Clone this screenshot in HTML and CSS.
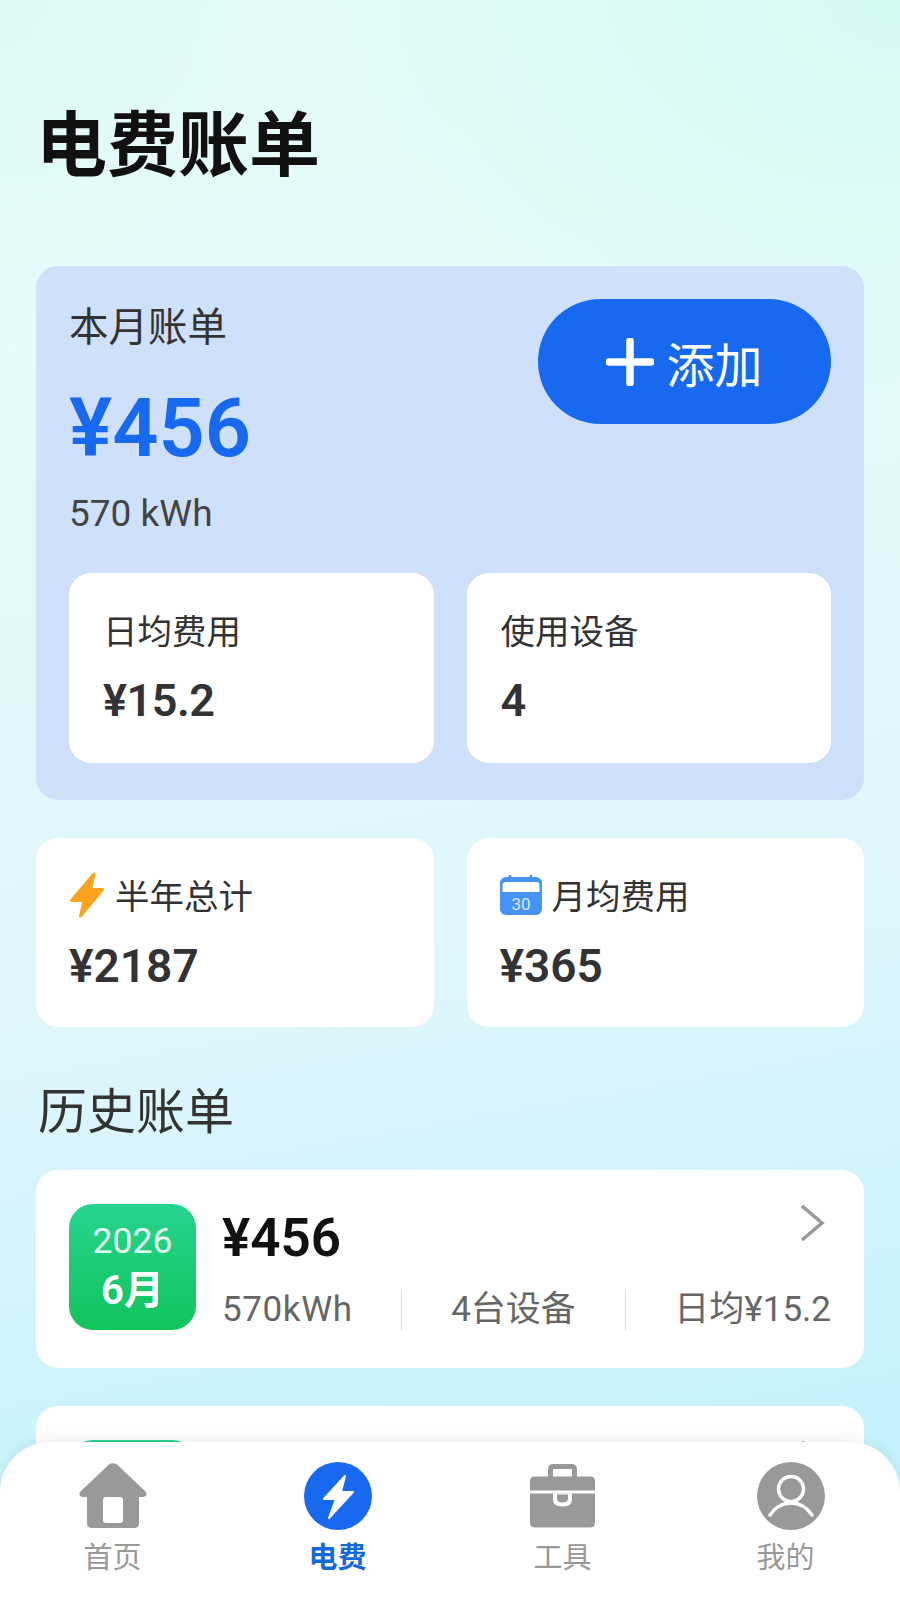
FILE: index.html
```html
<!DOCTYPE html>
<html lang="zh">
<head>
<meta charset="utf-8">
<title>电费账单</title>
<link rel="stylesheet" href="styles.css">
</head>
<body>
<main class="page">
  <h1 class="title">电费账单</h1>
  <section class="bill">
    <div class="bill-top">
      <div class="bill-info">
        <div class="bill-label">本月账单</div>
        <div class="bill-amount">¥456</div>
        <div class="bill-kwh">570 kWh</div>
      </div>
      <button class="add">
        <svg class="add-icon" viewBox="0 0 48 48"><path d="M24 3v42M3 24h42" fill="none" stroke="#fff" stroke-width="7.500" stroke-linecap="round"/></svg>
        <span>添加</span>
      </button>
    </div>
    <div class="pair">
      <div class="mini"><div class="mini-label">日均费用</div><div class="mini-value">¥15.2</div></div>
      <div class="mini"><div class="mini-label">使用设备</div><div class="mini-value">4</div></div>
    </div>
  </section>
  <section class="pair stats">
    <div class="stat">
      <div class="stat-head">
        <svg class="bolt" viewBox="0 0 36 46"><path d="M25 2 2.500 28.500H15L11.500 44 33.500 17.500H21.500L25 2Z" fill="#fba31f" stroke="#fba31f" stroke-width="3" stroke-linejoin="round"/></svg>
        <span>半年总计</span>
      </div>
      <div class="stat-value">¥2187</div>
    </div>
    <div class="stat">
      <div class="stat-head">
        <svg class="cal" viewBox="0 0 42 40"><rect y="2" width="42" height="38" rx="6" fill="#4793f3"/><path d="M2.500 17V10q0-3 3-3h31q3 0 3 3v7z" fill="#fff"/><path d="M10 0v7M31 0v7" stroke="#4793f3" stroke-width="2.500"/><text x="21" y="35" text-anchor="middle" class="cal-num">30</text></svg>
        <span>月均费用</span>
      </div>
      <div class="stat-value">¥365</div>
    </div>
  </section>
  <h2 class="history">历史账单</h2>
  <section class="list">
    <article class="row">
      <div class="badge"><span class="badge-year">2026</span><span class="badge-month">6月</span></div>
      <div class="row-body">
        <div class="row-top">
          <span class="row-amount">¥456</span>
          <svg class="chev" viewBox="0 0 26 38"><path d="M3 2l20 17L3 36" fill="none" stroke="#999" stroke-width="3.500"/></svg>
        </div>
        <div class="row-meta">
          <span class="meta-kwh">570kWh</span><i class="sep"></i><span>4台设备</span><i class="sep"></i><span>日均¥15.2</span>
        </div>
      </div>
    </article>
    <article class="row">
      <div class="badge"></div>
      <div class="row-body">
        <div class="row-top end">
          <svg class="chev" viewBox="0 0 26 38"><path d="M3 2l20 17L3 36" fill="none" stroke="#999" stroke-width="3.500"/></svg>
        </div>
      </div>
    </article>
  </section>
</main>
<nav class="nav">
  <div class="tab">
    <svg class="tab-icon" viewBox="0 0 68 66"><path fill-rule="evenodd" d="M30 1.500Q34-1 38 1.500L66 28Q70 33 64 34H60V60Q60 65 55 65H13Q8 65 8 60V34H4Q-2 33 2 28ZM27 34Q24 34 24 37V57Q24 60 27 60H41Q44 60 44 57V37Q44 34 41 34Z" fill="#999"/></svg>
    <span>首页</span>
  </div>
  <div class="tab active">
    <svg class="tab-icon" viewBox="0 0 68 68"><circle cx="34" cy="34" r="34" fill="#1769f0"/><path d="M41 14 20 37H32L25 56 49 30H37Z" fill="#fff" stroke="#fff" stroke-width="2" stroke-linejoin="round"/></svg>
    <span>电费</span>
  </div>
  <div class="tab">
    <svg class="tab-icon tab-case" viewBox="0 0 65 63"><path d="M20.500 13V5q0-3 3-3h18q3 0 3 3v8" fill="none" stroke="#999" stroke-width="5"/><path d="M0 26V17q0-5 5-5H60q5 0 5 5v9Z" fill="#999"/><path d="M0 29H65V58q0 5-5 5H5q-5 0-5-5Z" fill="#999"/><path d="M23 29v6q0 7 9.500 7t9.500-7V29Z" fill="#fff"/><path d="M27 30v4q0 4 5.500 4t5.500-4v-4Z" fill="#999"/></svg>
    <span>工具</span>
  </div>
  <div class="tab tab-me">
    <svg class="tab-icon" viewBox="0 0 68 68"><circle cx="34" cy="34" r="34" fill="#999"/><circle cx="34" cy="27" r="12.500" fill="none" stroke="#fff" stroke-width="3.500"/><path d="M13 53Q21 41 34 41T55 53" fill="none" stroke="#fff" stroke-width="3.500" stroke-linecap="round"/></svg>
    <span>我的</span>
  </div>
</nav>
</body>
</html>
```
FILE: styles.css
```css
* { box-sizing: border-box; }
html, body { margin: 0; height: 1600px; overflow: hidden; }
body {
  font-family: Roboto, "Noto Sans CJK SC", sans-serif;
  color: #333;
  background:
    radial-gradient(600px 420px at 100% 0, #d4faf4, rgba(212,250,244,0)),
    radial-gradient(300px 300px at 0 0, #def9f5, rgba(222,249,245,0)),
    linear-gradient(170deg, #e4fbf9 0%, #e6fbfb 20%, #e0f6fc 58%, #c6f3fb 88%);
  position: relative;
}
.page { padding: 101px 36px 0 36px; display: flex; flex-direction: column; }
.title { margin: 0 0 75px 0; font-size: 71px; line-height: 90px; font-weight: 700; color: #111; }
.bill { background: #cfe0fb; border-radius: 22px; padding: 33px 33px 37px; display: flex; flex-direction: column; gap: 37px; }
.bill-top { display: flex; justify-content: space-between; align-items: flex-start; }
.bill-label { font-size: 39.500px; line-height: 50px; margin-top: 4px; }
.bill-amount { font-size: 81px; line-height: 94px; font-weight: 600; color: #1769f0; margin-top: 29px; }
.bill-kwh { font-size: 37px; line-height: 44px; margin-top: 16px; color: #444; }
.add { width: 293px; height: 125px; border: 0; border-radius: 63px; background: #1769f0; color: #fff; display: flex; align-items: center; justify-content: center; gap: 12px; font-family: inherit; font-size: 48px; }
.add-icon { width: 48px; height: 48px; }
.pair { display: grid; grid-template-columns: 1fr 1fr; gap: 33px; }
.mini { background: #fff; border-radius: 22px; height: 190px; padding: 36px 34px; }
.mini-label { font-size: 34.500px; line-height: 46px; }
.mini-value { font-size: 45px; line-height: 56px; font-weight: 600; margin-top: 18px; letter-spacing: -.5px; }
.stats { margin-top: 38px; }
.stat { background: #fff; border-radius: 22px; height: 189px; padding: 31px 33px; }
.stat-head { display: flex; align-items: center; gap: 10px; font-size: 34.500px; line-height: 56px; }
.bolt { width: 36px; height: 46px; margin-top: -4px; }
.cal { width: 42px; height: 40px; margin-top: -4px; }
.cal-num { font-size: 17px; fill: #d6e8ff; font-family: Roboto, sans-serif; }
.stat-value { font-size: 46px; line-height: 56px; font-weight: 600; margin-top: 13px; }
.history { margin: 54px 0 0 2px; font-size: 49px; line-height: 64px; font-weight: 400; color: #333; }
.list { display: flex; flex-direction: column; gap: 38px; margin-top: 25px; }
.row { background: #fff; border-radius: 22px; height: 198px; padding: 34px 33px; display: flex; gap: 26px; }
.badge { width: 127px; height: 126px; border-radius: 24px; background: linear-gradient(180deg, #26d48f, #12c45c); color: #fff; display: flex; flex-direction: column; align-items: center; justify-content: center; flex: none; }
.badge-year { font-size: 35.500px; line-height: 50px; color: #e6fff2; margin-top: -3px; }
.badge-month { font-size: 40px; line-height: 50px; font-weight: 600; }
.row-body { flex: 1; display: flex; flex-direction: column; }
.row-top { display: flex; justify-content: space-between; align-items: flex-start; }
.end { justify-content: flex-end; }
.row-amount { font-size: 53px; line-height: 70px; font-weight: 600; color: #111; margin-top: -1px; }
.chev { width: 26px; height: 38px; margin: 0 6px 0 0; }
.row-meta { display: flex; justify-content: space-between; align-items: center; font-size: 35px; line-height: 44px; color: #666; margin-top: 15px; }
.meta-kwh { letter-spacing: .6px; }
.sep { width: 1px; height: 42px; background: #ddd; }
.nav { position: absolute; left: 0; right: 0; bottom: 0; height: 158px; background: #fff; border-radius: 50px 50px 0 0; box-shadow: 0 -4px 12px rgba(0,0,0,.06); display: grid; grid-template-columns: repeat(4, 1fr); padding: 20px 0 0 0; }
.tab { display: flex; flex-direction: column; align-items: center; color: #999; font-size: 29px; line-height: 40px; gap: 8px; }
.tab-icon { width: 68px; height: 68px; }
.tab-case { width: 65px; }
.tab-me .tab-icon { margin-left: 6px; }
.tab-me span { margin-right: 4px; }
.active { color: #1769d8; font-weight: 700; }
```
